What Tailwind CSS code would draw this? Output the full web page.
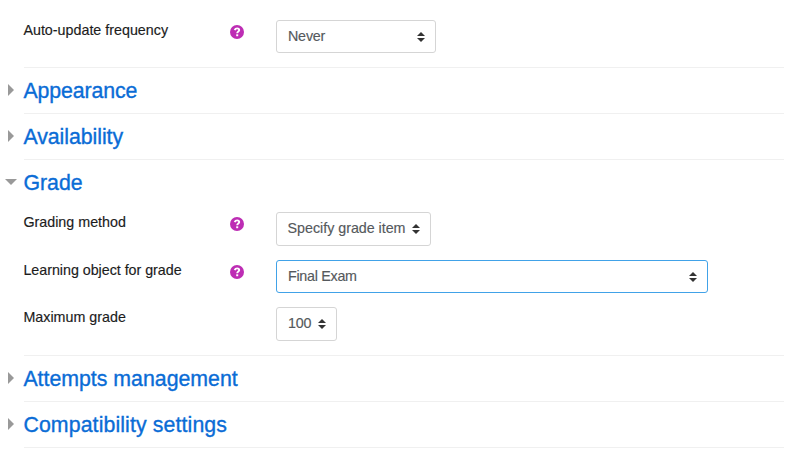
<!DOCTYPE html>
<html lang="en">
<head>
<meta charset="utf-8">
<title>Activity settings</title>
<script src="https://cdn.jsdelivr.net/npm/@tailwindcss/browser@4"></script>
</head>
<body class="bg-white font-['Helvetica_Neue','Liberation_Sans',sans-serif] text-[14.3px] text-[#1c1c1c] overflow-hidden [-webkit-text-stroke:0.15px]">
<svg class="hidden">
  <symbol id="help" viewBox="0 0 14 14"><circle cx="7" cy="7" r="7" fill="#bd2db4"/><path d="M4.7 5.2 C5.2 3.9 6 3.4 7.1 3.4 C8.4 3.4 9.2 4.2 9.2 5.1 C9.2 6.6 7.2 6.5 7.2 8.3" fill="none" stroke="#fff" stroke-width="1.9"/><path d="M6.2 9.3 H8.2 V11.2 H6.2 Z" fill="#fff"/></symbol>
  <symbol id="updown" viewBox="0 0 8 10"><path d="M4 0 8 4H0zM0 6h8L4 10z" fill="#333"/></symbol>
  <symbol id="right" viewBox="0 0 6 12"><path d="M0 0 6 6 0 12z" fill="#999"/></symbol>
  <symbol id="down" viewBox="0 0 12 6"><path d="M0 0h12L6 6z" fill="#999"/></symbol>
</svg>
<form class="w-[784px]">
  <div class="ml-[24px] h-[68px] border-b border-[#f0f0f0] pt-5 flex items-start">
    <label class="w-[206px] -indent-[0.6px] leading-5 whitespace-nowrap">Auto-update frequency</label>
    <svg class="size-[14px] mt-[5px] mr-8"><use href="#help"/></svg>
    <div class="w-[160px] h-[33px] border border-[#d5d5d5] rounded-[3px] flex items-center justify-between pl-[11px] pr-[10px] text-[#55595c]"><span class="tracking-[-0.2px]">Never</span><svg class="w-2 h-[10px] mt-px"><use href="#updown"/></svg></div>
  </div>
  <section class="flex h-[46px]">
    <div class="w-6 pl-2 pt-4"><svg class="w-[6px] h-3"><use href="#right"/></svg></div>
    <h3 class="flex-1 border-b border-[#f0f0f0] pt-[10px] -indent-[0.6px] text-[21.3px] leading-[26px] tracking-[-0.1px] text-[#0a6cd6] [-webkit-text-stroke:0.35px]">Appearance</h3>
  </section>
  <section class="flex h-[46px]">
    <div class="w-6 pl-2 pt-4"><svg class="w-[6px] h-3"><use href="#right"/></svg></div>
    <h3 class="flex-1 border-b border-[#f0f0f0] pt-[10px] -indent-[0.6px] text-[21.3px] leading-[26px] tracking-[-0.05px] text-[#0a6cd6] [-webkit-text-stroke:0.35px]">Availability</h3>
  </section>
  <section class="flex h-[196px]">
    <div class="w-6 pl-[5px] pt-[19px]"><svg class="w-3 h-[6px]"><use href="#down"/></svg></div>
    <div class="flex-1 border-b border-[#f0f0f0] pt-[10px]">
      <h3 class="-indent-[0.6px] text-[21.3px] leading-[26px] h-[42px] text-[#0a6cd6] [-webkit-text-stroke:0.35px]">Grade</h3>
      <div class="h-12 flex items-start">
        <label class="w-[206px] -indent-[0.6px] leading-5 whitespace-nowrap">Grading method</label>
        <svg class="size-[14px] mt-[5px] mr-8"><use href="#help"/></svg>
        <div class="w-[155px] h-[34px] border border-[#d5d5d5] rounded-[3px] flex items-center justify-between pl-[11px] pr-[10px] text-[#55595c] whitespace-nowrap"><span class="-indent-[0.4px] tracking-[-0.03px]">Specify grade item</span><svg class="w-2 h-[10px]"><use href="#updown"/></svg></div>
      </div>
      <div class="h-[47px] flex items-start">
        <label class="w-[206px] -indent-[0.6px] leading-5 tracking-[-0.03px] whitespace-nowrap">Learning object for grade</label>
        <svg class="size-[14px] mt-[5px] mr-8"><use href="#help"/></svg>
        <div class="w-[432px] h-[33px] border border-[#41a2e8] rounded-[3px] flex items-center justify-between pl-[11px] pr-[10px] text-[#55595c]"><span class="tracking-[-0.28px]">Final Exam</span><svg class="w-2 h-[10px] mt-px"><use href="#updown"/></svg></div>
      </div>
      <div class="flex items-start">
        <label class="w-[252px] -indent-[0.6px] leading-5 whitespace-nowrap">Maximum grade</label>
        <div class="w-[61px] h-[34px] border border-[#d5d5d5] rounded-[3px] flex items-center justify-between pl-[11px] pr-[10px] text-[#55595c]"><span class="tracking-[-0.2px]">100</span><svg class="w-2 h-[10px]"><use href="#updown"/></svg></div>
      </div>
    </div>
  </section>
  <section class="flex h-[46px]">
    <div class="w-6 pl-2 pt-4"><svg class="w-[6px] h-3"><use href="#right"/></svg></div>
    <h3 class="flex-1 border-b border-[#f0f0f0] pt-[10px] -indent-[0.6px] text-[21.3px] leading-[26px] text-[#0a6cd6] [-webkit-text-stroke:0.35px]">Attempts management</h3>
  </section>
  <section class="flex h-[46px]">
    <div class="w-6 pl-2 pt-4"><svg class="w-[6px] h-3"><use href="#right"/></svg></div>
    <h3 class="flex-1 border-b border-[#f0f0f0] pt-[10px] -indent-[0.6px] text-[21.3px] leading-[26px] tracking-[0.11px] text-[#0a6cd6] [-webkit-text-stroke:0.35px]">Compatibility settings</h3>
  </section>
</form>
</body>
</html>
